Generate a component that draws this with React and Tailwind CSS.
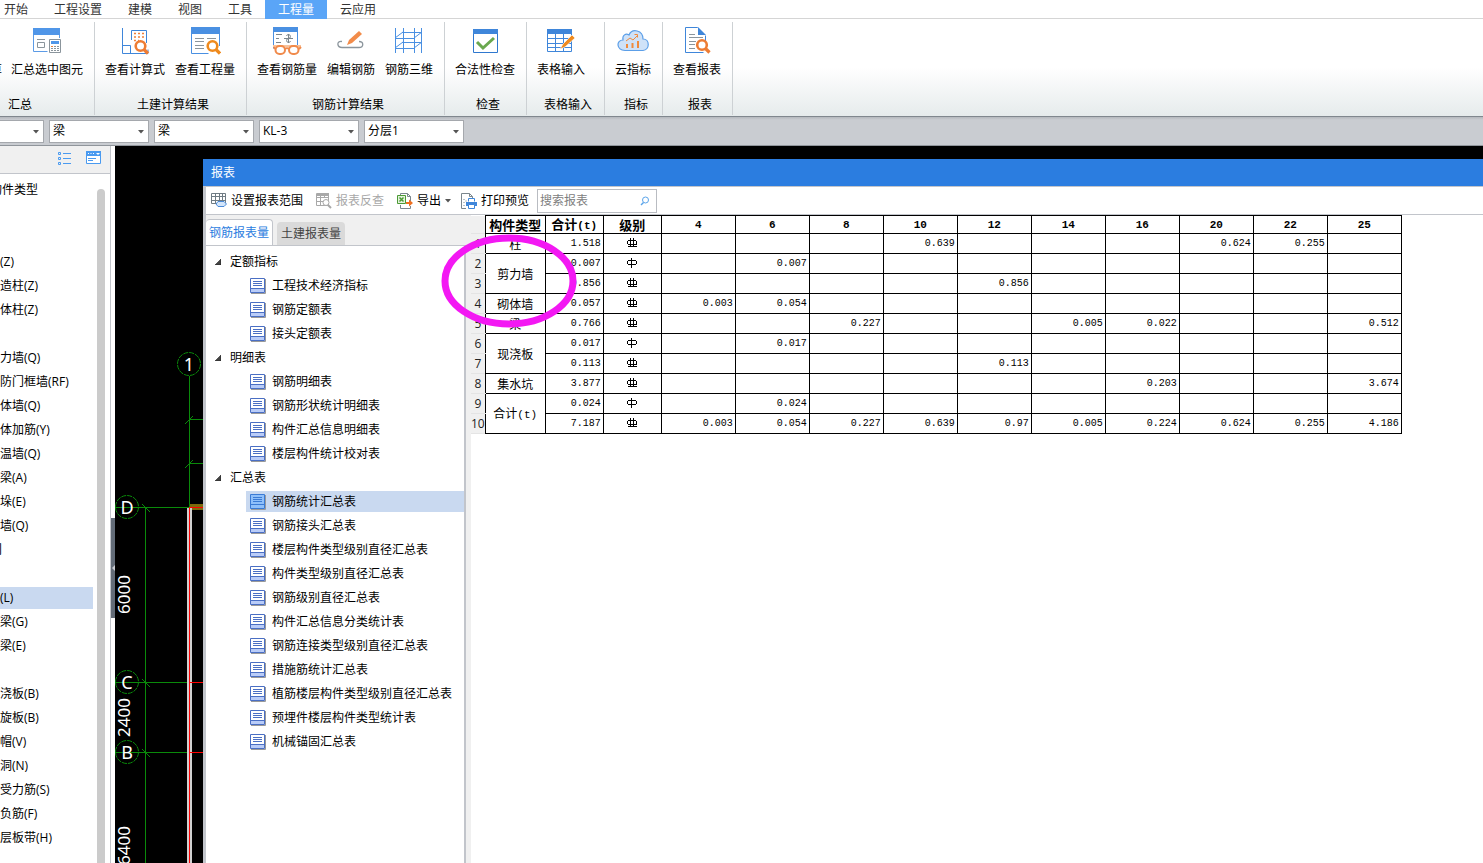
import { useState } from "react";

const tabs = ["开始", "工程设置", "建模", "视图", "工具", "工程量", "云应用"];

/* ---------- Ribbon icons ---------- */

function Magnifier({ x, y, color }) {
  return (
    <g stroke={color} fill="#fff">
      <circle cx={x} cy={y} r="4.800" strokeWidth="2.600" />
      <path d={`M${x + 3.5} ${y + 3.5}L${x + 7.5} ${y + 7.5}`} strokeWidth="3.200" />
    </g>
  );
}

const icons = {
  sumSelected: (
    <>
      <path d="M2.500 3v22.500h14M28.500 9v3" fill="none" stroke="#5c9be6" />
      <path d="M2 2h27v7H2z" fill="#5096e8" />
      <path d="M6.500 16.500h7v5h-7zM6 13.500h8" fill="none" stroke="#8b959c" />
      <path d="M18.500 13.500h11v13h-11z" fill="#fff" stroke="#8b959c" />
      <path d="M20 15h8v3h-8z" fill="#5096e8" />
      <path d="M20 20.500h8M20 22.500h8M20 24.500h8" stroke="#8b959c" strokeDasharray="2 1" />
      <path d="M20 20.500h2" stroke="#f0803a" />
    </>
  ),
  formula: (
    <>
      <path d="M3.500 2v25.500h25.500v-4M3.500 19.500h8v8M12.500 14V4.500h15V17" fill="none" stroke="#3f86da" />
      <path d="M15 7.500h11M15 11h11M15 14.500h5" stroke="#f0803a" strokeWidth="1.500" strokeDasharray="2 2" />
      <Magnifier x={21.500} y={20} color="#ee7c33" />
    </>
  ),
  quantity: (
    <>
      <path d="M2.500 2v25.500h17M30.500 8v12" fill="none" stroke="#4a90e2" />
      <path d="M2 1h29v7H2z" fill="#4a90e2" />
      <path d="M6 12.500h9M18 12.500h9M6 15.500h9M6 19.500h9M6 22.500h9" stroke="#8b959c" />
      <Magnifier x={23.500} y={20} color="#ef8a1d" />
    </>
  ),
  rebar: (
    <>
      <path d="M2.500 2v20.500M26.500 6v14" fill="none" stroke="#4a90e2" />
      <path d="M2 1h25v5H2z" fill="#4a90e2" />
      <path d="M5 8.500h6M5 12.500h3M5 16.500h5M13 12.500h9M17.500 8v9M15.500 10a2 2 0 1 1 2 2.500M19.500 15a2 2 0 1 1-2-2.500" fill="none" stroke="#7b868d" />
      <path d="M2 20h28" stroke="#f9c39b" strokeWidth="2" />
      <path d="M14 23c1-1 3-1 4 0M4 23l-1-2M28 23l2-2" stroke="#f08a4b" strokeWidth="2" fill="none" />
      <rect x="4.500" y="20" width="9.500" height="8" rx="4" fill="#fff" stroke="#f08a4b" strokeWidth="2" />
      <rect x="18" y="20" width="9.500" height="8" rx="4" fill="#fff" stroke="#f08a4b" strokeWidth="2" />
    </>
  ),
  editRebar: (
    <>
      <path d="M7 15.500c-6-1-5 6 0 6h17c5 0 5-6 0-6" fill="none" stroke="#8b959c" strokeWidth="1.300" />
      <path d="M12 19l2-5L24 5l3 3-10 9z" fill="#f28c4a" />
    </>
  ),
  rebar3d: (
    <path
      d="M2.500 2v25M10.500 2v25M21.500 2v25M28.500 2v25M9 6.500h20M2 12.500h20M9 16.500h20M2 22.500h20M2 12l8-6M21 12l8-6M2 22l8-6M21 22l8-6"
      fill="none"
      stroke="#4a90e2"
    />
  ),
  legality: (
    <>
      <path d="M4.500 4v22.500h24V4" fill="#fff" stroke="#2f78cf" />
      <path d="M4 3h25v5H4z" fill="#3f86da" />
      <path d="M8 16l6 6 11-10" fill="none" stroke="#6aa84f" strokeWidth="3" />
    </>
  ),
  tableInput: (
    <>
      <path d="M2.500 3.500h24v22h-24zM2.500 12.500h24M2.500 17.500h24M2.500 21.500h24M10.500 8v18M18.500 8v18" fill="none" stroke="#3f86da" />
      <path d="M2 3h25v5H2z" fill="#3f86da" />
      <path d="M15 23l3-5L27 9l3 3-10 9z" fill="#ef8a1d" stroke="#fff" strokeWidth=".600" />
    </>
  ),
  cloud: (
    <>
      <path d="M8 24.500C-1 24-1 14 6 14c-1-5 3-7 6-5 3-7 14-5 14 4 7 0 7 11 0 11.500z" fill="#cfe2f8" stroke="#5c9fe8" strokeWidth="1.200" />
      <path d="M10 22v-4M15.500 22v-5M21 22v-7" stroke="#f08a3c" strokeWidth="2" />
      <path d="M9 15l4-3 3 2 5-5M17.500 8.500h3v3" fill="none" stroke="#f08a3c" />
    </>
  ),
  report: (
    <>
      <path d="M16.500 1.500h-12v25h18M24.500 10v5M16.500 1.500l8 8" fill="none" stroke="#3f86da" />
      <path d="M17 1l8 8h-8z" fill="#3f86da" />
      <path d="M8 8.500h6M8 11.500h14M8 15.500h7M8 18.500h6M8 22.500h6" stroke="#8b959c" />
      <Magnifier x={21} y={19} color="#ee7c33" />
    </>
  ),
};

const ribbon = [
  { name: "汇总", width: "w-[95px]", labelClass: "pl-[8px] text-left", items: [{ icon: "sumSelected", label: "汇总选中图元", width: "w-[78px]" }] },
  {
    name: "土建计算结果",
    width: "w-[152px] pl-[5px]",
    items: [
      { icon: "formula", label: "查看计算式", width: "w-[70px]" },
      { icon: "quantity", label: "查看工程量", width: "w-[70px]" },
    ],
  },
  {
    name: "钢筋计算结果",
    width: "w-[198px] pl-[5px]",
    items: [
      { icon: "rebar", label: "查看钢筋量", width: "w-[70px]" },
      { icon: "editRebar", label: "编辑钢筋", width: "w-[58px]" },
      { icon: "rebar3d", label: "钢筋三维", width: "w-[58px]" },
    ],
  },
  { name: "检查", width: "w-[82px] pl-[5px]", items: [{ icon: "legality", label: "合法性检查", width: "w-[70px]" }] },
  { name: "表格输入", width: "w-[78px] pl-[5px]", items: [{ icon: "tableInput", label: "表格输入", width: "w-[58px]" }] },
  { name: "指标", width: "w-[58px] pl-[5px]", items: [{ icon: "cloud", label: "云指标", width: "w-[46px]" }] },
  { name: "报表", width: "w-[70px] pl-[5px]", items: [{ icon: "report", label: "查看报表", width: "w-[58px]" }] },
];

function RibbonGroup({ group, first }) {
  return (
    <section className={`flex h-[93px] shrink-0 flex-col border-r border-[#cdd1d4] ${group.width}`}>
      <div className="flex">
        {first && (
          <button className="flex w-2 shrink-0 flex-col items-end overflow-hidden pt-[38px] pr-[6px] leading-5">算</button>
        )}
        {group.items.map((item) => (
          <button key={item.label} className={`flex shrink-0 flex-col items-center whitespace-nowrap ${item.width}`}>
            <svg width="32" height="30" viewBox="0 0 32 30" className="mt-1">
              {icons[item.icon]}
            </svg>
            <span className="mt-1 leading-5">{item.label}</span>
          </button>
        ))}
      </div>
      <h2 className={`mt-auto leading-5 ${group.labelClass || "text-center"}`}>{group.name}</h2>
    </section>
  );
}

/* ---------- Filter bar ---------- */

const filters = [
  { label: "构件大类", value: "梁" },
  { label: "构件类型", value: "梁" },
  { label: "构件名称", value: "KL-3" },
  { label: "分层", value: "分层1" },
];

function Caret({ className = "" }) {
  return (
    <svg width="6" height="4" viewBox="0 0 6 4" className={className}>
      <path d="M0 0h6L3 3.500z" fill="#555" />
    </svg>
  );
}

function Combo({ label, value, className = "w-[100px]" }) {
  return (
    <div className={`relative h-[23px] border border-[#a5a8ad] bg-white ${className}`}>
      <select aria-label={label} className="h-full w-full appearance-none pl-[3px] leading-5 outline-none">
        <option>{value}</option>
      </select>
      <Caret className="pointer-events-none absolute top-[9px] right-1" />
    </div>
  );
}

/* ---------- Component list ---------- */

const componentRows = [
  "", "", "(Z)", "造柱(Z)", "体柱(Z)", "", "力墙(Q)", "防门框墙(RF)", "体墙(Q)", "体加筋(Y)", "温墙(Q)",
  "梁(A)", "垛(E)", "墙(Q)", "门", "", "(L)", "梁(G)", "梁(E)", "", "浇板(B)", "旋板(B)", "帽(V)",
  "洞(N)", "受力筋(S)", "负筋(F)", "层板带(H)",
];

function Sidebar() {
  return (
    <aside className="flex w-[111px] shrink-0 flex-col border-r border-[#c2c5cb] bg-white">
      <div className="flex h-7 shrink-0 items-start justify-end gap-[14px] border-b border-[#c2c5cb] bg-[#f0f0f0] pt-[5px] pr-2">
        <button aria-label="列表">
          <svg width="14" height="14" viewBox="0 0 14 14" fill="none" stroke="#4a9af0">
            <path d="M.500 1.500h2v2h-2zM.500 6.500h2v2h-2zM.500 11.500h2v2h-2zM5 2.500h8M5 7.500h8M5 12.500h8" />
          </svg>
        </button>
        <button aria-label="面板">
          <svg width="16" height="14" viewBox="0 0 16 14">
            <path d="M.500.500h14v12H.500z" fill="#fff" stroke="#4a9af0" />
            <path d="M0 0h15v5H0z" fill="#4a9af0" />
            <path d="M2 2.500h1M4.500 2.500h1M7 2.500h1" stroke="#fff" />
            <path d="M10 2h4l-2 2z" fill="#fff" />
            <path d="M2 7.500h8M2 9.500h5" stroke="#4a9af0" />
          </svg>
        </button>
      </div>
      <div className="flex min-h-0 flex-1 overflow-hidden pt-1">
        <div className="min-w-0 flex-1 overflow-hidden whitespace-nowrap">
          <h2 className="-ml-[10px] h-6 leading-6">构件类型</h2>
          <ul>
            {componentRows.map((row, i) => (
              <li key={i} className="h-6 pt-[1px] pr-1">
                <div className={`h-[22px] leading-[22px] ${row === "(L)" ? "bg-[#c9d9f0]" : ""}`}>
                  <span className={row === "门" ? "-ml-[10px]" : ""}>{row}</span>
                </div>
              </li>
            ))}
          </ul>
        </div>
        <div className="mt-[11px] mr-[5px] w-2 rounded-t bg-[#cbcbcb]" />
      </div>
    </aside>
  );
}

/* ---------- Drawing area ---------- */

function Axis({ x, y, name }) {
  return (
    <g>
      <circle cx={x} cy={y} r="11.500" fill="none" stroke="#0a8a0a" strokeDasharray="5 1" />
      <text x={x} y={y + 7} fill="#fff" fontSize="18" textAnchor="middle">{name}</text>
    </g>
  );
}

function Drawing() {
  return (
    <svg width="88" height="717" viewBox="0 0 88 717" className="shrink-0 bg-black font-['Noto_Sans']">
      <g stroke="#0a8a0a" fill="none">
        <path d="M74.500 230v132M74.500 273.500H88M74.500 317.500H88M70 278l8-8M70 322l8-8" />
        <path d="M0 361.500h75M0 536.500h75M0 606.500h75M30.500 362v355M27 358l8 8M27 533l8 8M27 603l8 8" />
      </g>
      <path d="M75 358h13v6H75z" fill="#7c6a0c" />
      <path d="M72 362h5v355h-5z" fill="#d0d0d0" />
      <path d="M74.500 361v356M75 361.500h13M75 536.500h13M75 606.500h13" stroke="#ff0000" fill="none" />
      <Axis x={74} y={218} name="1" />
      <Axis x={12} y={361} name="D" />
      <Axis x={12} y={536} name="C" />
      <Axis x={12} y={606} name="B" />
      <g fill="#fff" fontSize="17">
        <text transform="translate(15 468) rotate(-90)">6000</text>
        <text transform="translate(15 591) rotate(-90)">2400</text>
        <text transform="translate(15 719) rotate(-90)">6400</text>
      </g>
    </svg>
  );
}

/* ---------- Report tree ---------- */

const reportTree = [
  { name: "定额指标", reports: ["工程技术经济指标", "钢筋定额表", "接头定额表"] },
  { name: "明细表", reports: ["钢筋明细表", "钢筋形状统计明细表", "构件汇总信息明细表", "楼层构件统计校对表"] },
  {
    name: "汇总表",
    reports: [
      "钢筋统计汇总表", "钢筋接头汇总表", "楼层构件类型级别直径汇总表", "构件类型级别直径汇总表", "钢筋级别直径汇总表",
      "构件汇总信息分类统计表", "钢筋连接类型级别直径汇总表", "措施筋统计汇总表", "植筋楼层构件类型级别直径汇总表",
      "预埋件楼层构件类型统计表", "机械锚固汇总表",
    ],
  },
];

function SheetIcon({ active }) {
  return (
    <svg width="16" height="16" viewBox="0 0 16 16" className="shrink-0">
      <path d="M1 15.500h14.500V1" fill="none" stroke="#9a9a9a" />
      <path d="M.500.500h14v14H.500z" fill={active ? "#8fc0fa" : "#fff"} stroke={active ? "#3a7bd5" : "#4a6fc4"} />
      <path d="M1 11h13v3H1z" fill={active ? "#8fc0fa" : "#b9ccf8"} />
      <path d="M3 3.500h9M3 5.500h9M3 7.500h9M1 10.500h13" stroke={active ? "#3a7bd5" : "#4a6fc4"} />
    </svg>
  );
}

function ReportTree() {
  const [selected, setSelected] = useState("钢筋统计汇总表");

  return (
    <div className="flex w-[260px] shrink-0 flex-col pt-1">
      <div className="flex h-[26px] shrink-0 items-end" role="tablist">
        <button role="tab" aria-selected="true" className="h-[26px] rounded-t border-t border-r border-[#c2c5cb] bg-white px-[3px] text-[#2b7de0]">
          钢筋报表量
        </button>
        <button role="tab" aria-selected="false" className="ml-1 h-[23px] rounded-t bg-[#dadada] px-1 text-[#444]">
          土建报表量
        </button>
      </div>
      <div className="flex-1 border-t border-r-2 border-[#c2c5cb] bg-white pt-1">
        {reportTree.map((group) => (
          <div key={group.name}>
            <div className="flex h-6 items-center pl-[9px]">
              <svg width="6" height="6" viewBox="0 0 6 6">
                <path d="M6 0v6H0z" fill="#444" stroke="#111" strokeWidth=".500" />
              </svg>
              <span className="pl-[9px]">{group.name}</span>
            </div>
            {group.reports.map((report) => (
              <div key={report} className="flex h-6 items-start pt-[1px] pl-[40px]">
                <button
                  onClick={() => setSelected(report)}
                  className={`flex h-[21px] flex-1 items-center gap-[6px] pl-1 whitespace-nowrap ${report === selected ? "bg-[#c9d9f0]" : ""}`}
                >
                  <SheetIcon active={report === selected} />
                  {report}
                </button>
              </div>
            ))}
          </div>
        ))}
      </div>
    </div>
  );
}

/* ---------- Report table ---------- */

const diameters = ["4", "6", "8", "10", "12", "14", "16", "20", "22", "25"];

const reportRows = [
  { type: "柱", span: 1, total: "1.518", grade: 3, values: { 10: "0.639", 20: "0.624", 22: "0.255" } },
  { type: "剪力墙", span: 2, total: "0.007", grade: 1, values: { 6: "0.007" } },
  { total: "0.856", grade: 3, values: { 12: "0.856" } },
  { type: "砌体墙", span: 1, total: "0.057", grade: 3, values: { 4: "0.003", 6: "0.054" } },
  { type: "梁", span: 1, total: "0.766", grade: 3, values: { 8: "0.227", 14: "0.005", 16: "0.022", 25: "0.512" } },
  { type: "现浇板", span: 2, total: "0.017", grade: 1, values: { 6: "0.017" } },
  { total: "0.113", grade: 3, values: { 12: "0.113" } },
  { type: "集水坑", span: 1, total: "3.877", grade: 3, values: { 16: "0.203", 25: "3.674" } },
  { type: "合计(t)", span: 2, total: "0.024", grade: 1, values: { 6: "0.024" } },
  {
    total: "7.187",
    grade: 3,
    values: { 4: "0.003", 6: "0.054", 8: "0.227", 10: "0.639", 12: "0.97", 14: "0.005", 16: "0.224", 20: "0.624", 22: "0.255", 25: "4.186" },
  },
];

function GradeMark({ grade }) {
  return (
    <svg width="12" height="11" viewBox="0 0 12 11" className="mx-auto" fill="none" stroke="#000" shapeRendering="crispEdges">
      {grade === 1 ? (
        <path d="M5.500 0v10M2 2.500h8M2 6.500h8M1.500 3v3M10.500 3v3" />
      ) : (
        <path d="M4.500 0v9M7.500 0v9M2 2.500h8M2 6.500h9M1.500 3v3M10.500 3v3M2 8.500h9" />
      )}
    </svg>
  );
}

function TypeName({ name }) {
  const [text, unit] = name.split("(");
  return (
    <>
      {text}
      {unit && <span className="font-['Liberation_Mono'] text-[11px]">({unit}</span>}
    </>
  );
}

function ReportTable() {
  return (
    <table className="table-fixed border-collapse bg-white font-['Noto_Sans_CJK_SC',sans-serif]">
      <colgroup>
        <col className="w-[14px]" />
        <col className="w-[60px]" />
        <col className="w-[58px]" />
        <col className="w-[58px]" />
        {diameters.map((d) => (
          <col key={d} className="w-[74px]" />
        ))}
      </colgroup>
      <thead>
        <tr className="h-[18px] text-[13px] leading-[14px]">
          <td className="bg-[#f0f0f0] p-0" />
          <th className="border border-black p-0 whitespace-nowrap">构件类型</th>
          <th className="border border-black p-0"><TypeName name="合计(t)" /></th>
          <th className="border border-black p-0">级别</th>
          {diameters.map((d) => (
            <th key={d} className="border border-black p-0 font-['Liberation_Mono'] text-[11px]">{d}</th>
          ))}
        </tr>
      </thead>
      <tbody>
        {reportRows.map((row, i) => (
          <tr key={i} className="h-5 leading-4">
            <td className="border-y border-[#e4e4e4] bg-[#f0f0f0] p-0 text-center font-['Open_Sans'] text-[12px] text-[#222]">{i + 1}</td>
            {row.type && (
              <td rowSpan={row.span} className="border border-black p-0 text-center"><TypeName name={row.type} /></td>
            )}
            <td className="border border-black py-0 pr-[2px] pl-0 text-right font-['Liberation_Mono'] text-[10px]">{row.total}</td>
            <td className="border border-black p-0"><GradeMark grade={row.grade} /></td>
            {diameters.map((d) => (
              <td key={d} className="border border-black py-0 pr-[2px] pl-0 text-right font-['Liberation_Mono'] text-[10px]">{row.values[d]}</td>
            ))}
          </tr>
        ))}
      </tbody>
    </table>
  );
}

/* ---------- Report dialog ---------- */

function ToolButton({ children, disabled, className = "" }) {
  return (
    <button disabled={disabled} className={`flex shrink-0 items-center gap-1 whitespace-nowrap ${disabled ? "text-[#a8a8a8]" : ""} ${className}`}>
      {children}
    </button>
  );
}

function ReportDialog() {
  return (
    <section className="mt-[13px] flex min-w-0 flex-1 flex-col bg-white">
      <h1 className="h-[27px] shrink-0 bg-[#2b7de0] pl-2 leading-[27px] text-white">报表</h1>
      <div className="flex min-h-0 flex-1 flex-col border-l-3 border-[#c2c5cb]">
        <div className="flex h-[29px] shrink-0 items-center border-t border-b border-[#c2c5cb] pl-[5px]">
          <ToolButton>
            <svg width="16" height="16" viewBox="0 0 16 16" fill="none" stroke="#6f7b83">
              <path d="M.500.500h14v10H.500zM.500 3.500h14M.500 7.500h14M4.500.500v10M8.500.500v10M11.500.500v10" />
              <path d="M7 8.500h6l2.500 2.500-2.500 2.500H7L5 11z" fill="#d3e5fa" stroke="#4a8ad8" />
            </svg>
            设置报表范围
          </ToolButton>
          <ToolButton disabled className="ml-[13px]">
            <svg width="16" height="16" viewBox="0 0 16 16" fill="none" stroke="#a8a8a8">
              <path d="M.500.500h12v12H.500zM.500 4.500h12M.500 8.500h7M4.500.500v12M8.500.500v4" />
              <path d="M1 0h12v3H1z" fill="#a8a8a8" stroke="none" />
              <circle cx="10" cy="9.500" r="3" fill="#fff" />
              <path d="M12 12l3 3" strokeWidth="2" />
            </svg>
            报表反查
          </ToolButton>
          <ToolButton className="ml-[13px]">
            <svg width="16" height="16" viewBox="0 0 16 16" fill="none">
              <path d="M3.500 2V.500h7l3 3V8M3.500 12v3.500h10V13M10.500.500v3h3" stroke="#7b868d" />
              <path d="M.500 2.500h8v8h-8z" fill="#e4f2dc" stroke="#4b9a35" />
              <path d="M2.500 4.500l4 4M6.500 4.500l-4 4" stroke="#4b9a35" strokeWidth="1.500" />
              <path d="M9 9h3V6.500l4 3.500-4 3.500V11H9z" fill="#ee6f1f" />
            </svg>
            导出
            <Caret />
          </ToolButton>
          <ToolButton className="ml-[10px]">
            <svg width="16" height="16" viewBox="0 0 16 16" fill="none">
              <path d="M5 15.500H.500V.500h8l3 3V5M8.500.500v3h3" stroke="#7b868d" />
              <path d="M3 6v1M3 9v1M5 7.500v1M3 12v1" stroke="#7b868d" />
              <path d="M7.500 8.500v-3h6v3" stroke="#3f86da" />
              <path d="M5 9h11v4H5z" fill="#3f86da" />
              <path d="M7.500 11.500h6v4h-6z" fill="#fff" stroke="#3f86da" />
            </svg>
            打印预览
          </ToolButton>
          <label className="ml-2 flex h-6 w-[120px] items-center border border-[#b9bcc2] bg-white px-[2px]">
            <input type="text" placeholder="搜索报表" aria-label="搜索报表" className="min-w-0 flex-1 outline-none placeholder:text-[#808080]" />
            <svg width="10" height="10" viewBox="0 0 10 10" className="mr-1" fill="none" stroke="#5aa4ea">
              <circle cx="5.500" cy="4" r="3" />
              <path d="M3.500 6.500L1 9" strokeWidth="1.500" />
            </svg>
          </label>
        </div>
        <div className="flex min-h-0 flex-1 bg-[#f0f0f0]">
          <ReportTree />
          <div className="relative ml-[5px] min-w-0 flex-1 bg-white">
            <ReportTable />
            {/* highlight round the first component types */}
            <svg width="136" height="96" viewBox="0 0 136 96" className="pointer-events-none absolute top-[18px] -left-[30px]">
              <ellipse cx="68" cy="48" rx="64" ry="43" fill="none" stroke="#f318f3" strokeWidth="7" />
            </svg>
          </div>
        </div>
      </div>
    </section>
  );
}

export default function App() {
  return (
    <div className="flex h-screen flex-col overflow-hidden bg-white font-['Open_Sans','Noto_Sans_CJK_SC',sans-serif] text-[12px] text-black">
      <nav className="flex h-[19px] shrink-0 border-b border-[#d5d5d5] text-[#333]">
        {tabs.map((tab, i) => (
          <button
            key={tab}
            className={`h-[19px] pr-[13px] leading-[18px] ${i === 0 ? "pl-1" : "pl-[13px]"} ${tab === "工程量" ? "bg-[#5aa5f7] text-white" : ""}`}
          >
            {tab}
          </button>
        ))}
      </nav>

      <div className="flex h-[98px] shrink-0 border-b border-[#80878e] bg-linear-to-b from-white from-50% to-[#e6ebec] pt-[3px]">
        {ribbon.map((group, i) => (
          <RibbonGroup key={group.name} group={group} first={i === 0} />
        ))}
      </div>

      <div className="flex h-[29px] shrink-0 items-center gap-[5px] border-b border-[#90959b] bg-linear-to-b from-[#b4b8bd] to-[#c9ccd1] to-10%">
        <Combo label="楼层" value="" className="w-[44px] border-l-0" />
        {filters.map((f) => (
          <Combo key={f.label} label={f.label} value={f.value} />
        ))}
      </div>

      <div className="flex min-h-0 flex-1">
        <Sidebar />
        <div className="flex w-1 shrink-0 flex-col bg-white pt-[372px]">
          <button aria-label="折叠" className="h-[100px] bg-[#636c78]">
            <svg width="4" height="6" viewBox="0 0 4 6">
              <path d="M4 0v6L1 3z" fill="#c9ccd1" />
            </svg>
          </button>
        </div>
        <div className="flex min-w-0 flex-1 bg-black">
          <Drawing />
          <ReportDialog />
        </div>
      </div>
    </div>
  );
}
